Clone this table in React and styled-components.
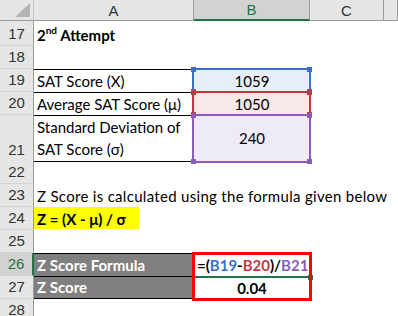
import React from 'react';
import styled, { createGlobalStyle } from 'styled-components';

const GlobalStyle = createGlobalStyle`
  html, body { margin: 0; padding: 0; background: #ffffff; }
  body {
    font-family: Lato, "Liberation Sans", sans-serif;
    font-size: 15px;
    color: #000;
    overflow: hidden;
  }
`;

const COLS = '34px 160px 116px 74px 1fr';

const Sheet = styled.div`
  width: 398px;
`;

const HeaderRow = styled.div`
  display: grid;
  grid-template-columns: ${COLS};
  height: 21px;
`;

const Corner = styled.div`
  background: #e6e6e6;
  border-right: 1px solid #c4c4c4;
  border-bottom: 1px solid #9b9b9b;
  display: flex;
  align-items: flex-end;
  justify-content: flex-end;
  padding: 0 3px 3px 0;
`;

const ColHead = styled.div`
  background: ${(p) => (p.$selected ? '#d2d2d2' : '#e6e6e6')};
  color: ${(p) => (p.$selected ? '#217346' : '#333')};
  border-right: 1px solid #9b9b9b;
  border-bottom: ${(p) => (p.$selected ? '2px solid #217346' : '1px solid #9b9b9b')};
  display: flex;
  align-items: center;
  justify-content: center;
  font-family: "Liberation Sans", Arial, sans-serif;
  font-size: 15px;
`;

const Row = styled.div`
  display: grid;
  grid-template-columns: ${COLS};
  height: ${(p) => p.$h || 23}px;
`;

const RowHead = styled.div`
  background: ${(p) => (p.$selected ? '#d2d2d2' : '#e6e6e6')};
  color: ${(p) => (p.$selected ? '#217346' : '#333')};
  border-right: ${(p) => (p.$selected ? '2px solid #217346' : '1px solid #9b9b9b')};
  border-bottom: 1px solid #d4d4d4;
  display: flex;
  align-items: flex-end;
  justify-content: center;
  padding-bottom: 1px;
  font-family: "Liberation Sans", Arial, sans-serif;
  font-size: 15px;
  line-height: 20px;
`;

const Cell = styled.div`
  position: relative;
  display: flex;
  align-items: ${(p) => (p.$middle ? 'center' : 'flex-end')};
  justify-content: ${(p) => (p.$center ? 'center' : 'flex-start')};
  padding: 0 3px 1px 3px;
  white-space: nowrap;
  line-height: 20px;
  letter-spacing: ${(p) => (p.$spread ? '0.3px' : 'normal')};
  font-weight: ${(p) => (p.$bold ? 700 : 400)};
  color: ${(p) => p.$color || '#000'};
  background: ${(p) => p.$fill || 'transparent'};
  border-top: ${(p) => (p.$top ? '1px solid #000' : 'none')};
  border-bottom: ${(p) => (p.$bottom ? '1px solid #000' : 'none')};
`;

const Wrapped = styled.div`
  white-space: normal;
  line-height: 22px;
`;

const Sup = styled.sup`
  font-size: 10px;
  line-height: 0;
  position: relative;
  top: -1px;
`;

const Marker = styled.span`
  background: #ffff00;
  padding: 0 3px;
  margin-left: -3px;
  align-self: stretch;
  display: flex;
  align-items: flex-end;
  width: 99px;
`;

const Ref = styled.span`
  color: ${(p) => p.$color};
`;

const RefBox = styled.div`
  position: absolute;
  left: -2px;
  top: -1px;
  right: -1px;
  bottom: -1px;
  border: 2px solid ${(p) => p.$color};
  pointer-events: none;
  z-index: 1;
`;

const Handle = styled.span`
  position: absolute;
  width: 5px;
  height: 5px;
  background: ${(p) => p.$color};
  ${(p) => (p.$bottom ? 'bottom: -3px;' : 'top: -3px;')}
  ${(p) => (p.$right ? 'right: -3px;' : 'left: -3px;')}
`;

const ActiveLine = styled.div`
  position: absolute;
  left: 0;
  right: 1px;
  bottom: -2px;
  height: 2px;
  background: #217346;
  z-index: 1;
`;

const ActiveHandle = styled.span`
  position: absolute;
  right: -3px;
  bottom: -4px;
  width: 5px;
  height: 5px;
  background: #217346;
  z-index: 1;
`;

const RedFrame = styled.div`
  position: absolute;
  left: -2px;
  top: -1px;
  width: 120px;
  height: 49px;
  box-sizing: border-box;
  border: 3px solid #ff0000;
  z-index: 2;
`;

const Highlight = ({ color }) => (
  <RefBox $color={color}>
    <Handle $color={color} />
    <Handle $color={color} $right />
    <Handle $color={color} $bottom />
    <Handle $color={color} $bottom $right />
  </RefBox>
);

const BLUE = '#3b6fc6';
const RED = '#c1393f';
const PURPLE = '#8a5cbb';

export default function App() {
  return (
    <>
      <GlobalStyle />
      <Sheet>
        <HeaderRow>
          <Corner>
            <svg width="15" height="14" viewBox="0 0 15 14">
              <polygon points="15,0 15,14 0,14" fill="#b4b4b4" />
            </svg>
          </Corner>
          <ColHead>A</ColHead>
          <ColHead $selected>B</ColHead>
          <ColHead>C</ColHead>
          <ColHead />
        </HeaderRow>

        <Row $h={25}>
          <RowHead>17</RowHead>
          <Cell $bold>
            <span>
              2<Sup>nd</Sup> Attempt
            </span>
          </Cell>
          <Cell />
          <Cell />
          <Cell />
        </Row>

        <Row>
          <RowHead>18</RowHead>
          <Cell />
          <Cell />
          <Cell />
          <Cell />
        </Row>

        <Row>
          <RowHead>19</RowHead>
          <Cell $top>SAT Score (X)</Cell>
          <Cell $center $fill="#e8eef8">
            1059
            <Highlight color={BLUE} />
          </Cell>
          <Cell />
          <Cell />
        </Row>

        <Row>
          <RowHead>20</RowHead>
          <Cell $top>Average SAT Score (μ)</Cell>
          <Cell $center $fill="#f9e8e8">
            1050
            <Highlight color={RED} />
          </Cell>
          <Cell />
          <Cell />
        </Row>

        <Row $h={46}>
          <RowHead>21</RowHead>
          <Cell $top $bottom>
            <Wrapped>
              Standard Deviation of
              <br />
              SAT Score (σ)
            </Wrapped>
          </Cell>
          <Cell $center $middle $fill="#efebf6">
            240
            <Highlight color={PURPLE} />
          </Cell>
          <Cell />
          <Cell />
        </Row>

        <Row>
          <RowHead>22</RowHead>
          <Cell />
          <Cell />
          <Cell />
          <Cell />
        </Row>

        <Row>
          <RowHead>23</RowHead>
          <Cell $spread>Z Score is calculated using the formula given below</Cell>
          <Cell />
          <Cell />
          <Cell />
        </Row>

        <Row>
          <RowHead>24</RowHead>
          <Cell $bold>
            <Marker>Z = (X - μ) / σ</Marker>
          </Cell>
          <Cell />
          <Cell />
          <Cell />
        </Row>

        <Row>
          <RowHead>25</RowHead>
          <Cell />
          <Cell />
          <Cell />
          <Cell />
        </Row>

        <Row>
          <RowHead $selected>26</RowHead>
          <Cell $bold $top $fill="#808080" $color="#ffffff">
            Z Score Formula
          </Cell>
          <Cell $bold>
            =(<Ref $color={BLUE}>B19</Ref>-<Ref $color={RED}>B20</Ref>)/
            <Ref $color={PURPLE}>B21</Ref>
            <ActiveLine />
            <ActiveHandle />
            <RedFrame />
          </Cell>
          <Cell />
          <Cell />
        </Row>

        <Row>
          <RowHead>27</RowHead>
          <Cell $bold $top $bottom $fill="#808080" $color="#ffffff">
            Z Score
          </Cell>
          <Cell $bold $center>
            0.04
          </Cell>
          <Cell />
          <Cell />
        </Row>

        <Row>
          <RowHead>28</RowHead>
          <Cell />
          <Cell />
          <Cell />
          <Cell />
        </Row>
      </Sheet>
    </>
  );
}
